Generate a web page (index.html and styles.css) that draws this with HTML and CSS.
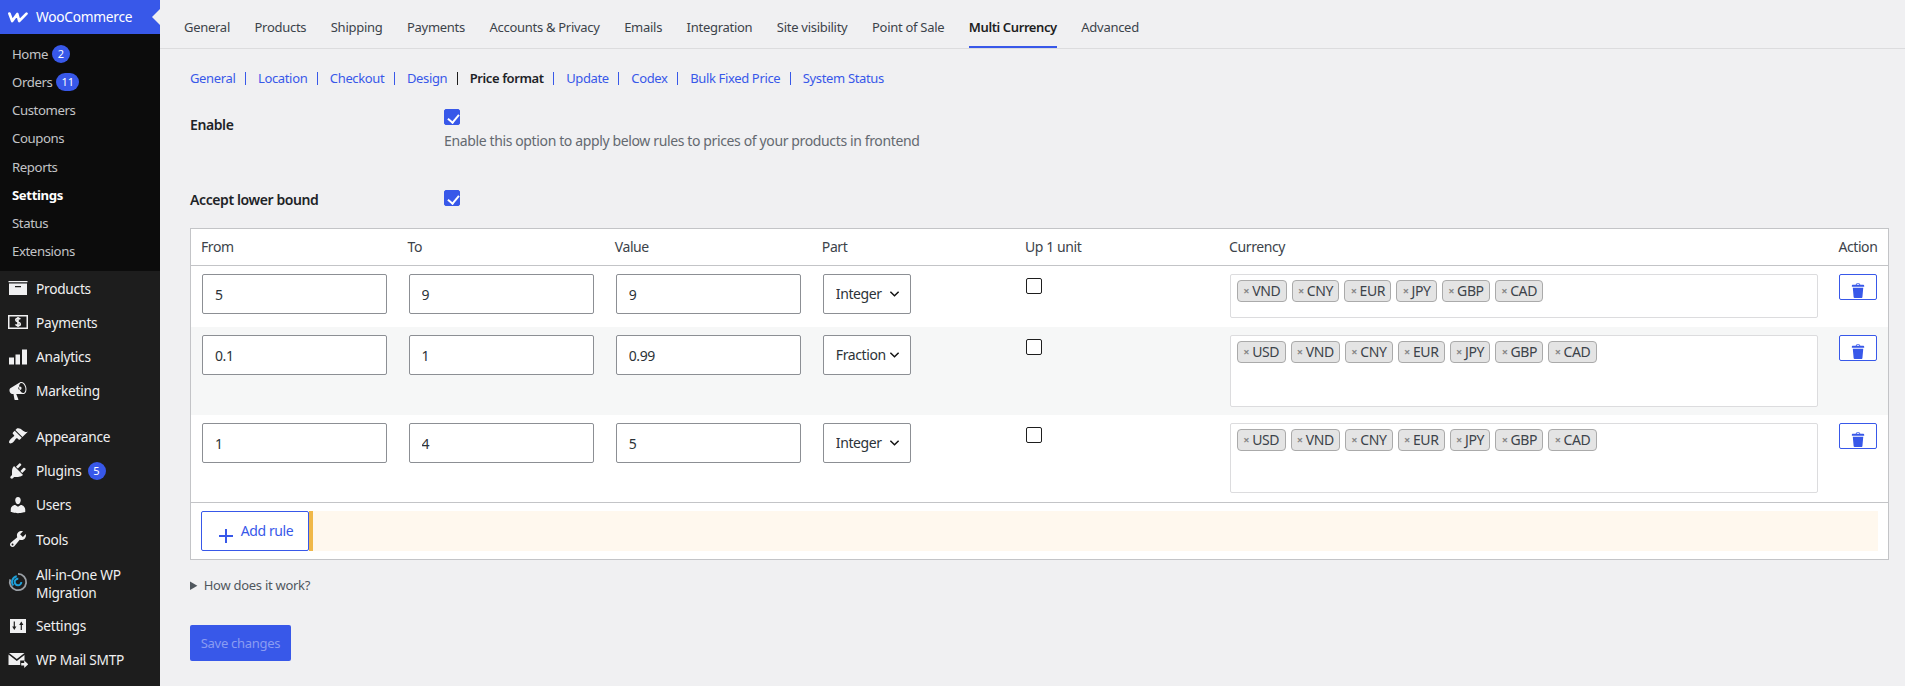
FILE: index.html
```html
<!DOCTYPE html>
<html lang="en">
<head>
<meta charset="utf-8">
<title>Multi Currency settings</title>
<link rel="stylesheet" href="styles.css">
</head>
<body>
<div class="app">
<aside class="sidebar">
  <a class="woo-head">
    <svg class="woo-logo" viewBox="0 0 20 11"><path d="M1.400 1.600L4.200 9 9.300 2l1.900 7 7.300-7.400"/></svg>
    <span>WooCommerce</span>
  </a>
  <ul class="submenu">
    <li>Home <b class="count">2</b></li>
    <li>Orders <b class="count">11</b></li>
    <li>Customers</li>
    <li>Coupons</li>
    <li>Reports</li>
    <li class="current">Settings</li>
    <li>Status</li>
    <li>Extensions</li>
  </ul>
  <ul class="mainmenu">
    <li><svg viewBox="0 0 20 20"><path d="M.500 3h19v1.200H.500zM1 5.500h18V17H1zM7 8v1.200h6V8z" fill-rule="evenodd"/></svg>Products</li>
    <li><svg viewBox="0 0 20 20"><path d="M0 3h20v14H0zm1.500 1.500v11h17v-11z" fill-rule="evenodd"/><path class="stroke" d="M12.300 7.300c-.5-.7-1.200-1-2.300-1-1.300 0-2.200.7-2.200 1.700 0 2.400 4.500 1.400 4.500 3.900 0 1-.9 1.700-2.300 1.700-1.200 0-2-.4-2.500-1.200M10 5v10"/></svg>Payments</li>
    <li><svg viewBox="0 0 20 20"><path d="M1 10h5v7H1zM7.500 7H12v10H7.500zM14 2h5v15h-5z" transform="translate(0 .4)"/></svg>Analytics</li>
    <li class="group-end"><svg viewBox="0 0 20 20"><path d="M18.150 5.940c.46 1.620.38 3.220-.02 4.480-.42 1.280-1.260 2.180-2.300 2.480-.16.060-.26.060-.4.060-.06.020-.12.020-.18.020-.06.020-.14.020-.22.020h-6.800l2.220 5.500c.02.140-.06.260-.14.340-.08.100-.24.160-.34.160H6.950c-.1 0-.26-.06-.34-.16-.08-.08-.16-.2-.14-.34l-1-5.500H4.250l-.02-.02c-.5.060-1.080-.18-1.540-.62s-.88-1.080-1.060-1.880c-.24-.8-.2-1.560-.02-2.200.18-.62.58-1.080 1.060-1.300l.02-.02 9-5.400c.1-.06.18-.1.24-.16.060-.04.14-.08.24-.12.16-.08.28-.12.5-.18 1.040-.3 2.240.1 3.220.98s1.840 2.240 2.260 3.860zm-2.580 5.980h-.02c.4-.1.74-.34 1.040-.7.58-.7.860-1.760.860-3.040 0-.64-.1-1.300-.26-1.980-.34-1.360-1.020-2.500-1.780-3.240s-1.680-1.100-2.460-.88c-.38.120-.72.340-1.020.7-.58.7-.86 1.760-.86 3.040 0 .64.1 1.300.26 1.980.34 1.360 1.020 2.500 1.780 3.240.78.74 1.680 1.100 2.460.88zm-4.760-3.500c.3.3.7.5 1.120.5.5 0 .9-.2 1.200-.5.3-.3.4-.7.4-1.200 0-.4-.1-.8-.4-1.100-.3-.3-.7-.5-1.200-.5-.42 0-.82.2-1.120.5-.28.3-.48.7-.48 1.100 0 .5.2.9.48 1.200z"/></svg>Marketing</li>
    <li><svg viewBox="0 0 20 20"><path d="M14.480 11.060L7.410 3.990l1.500-1.500c.5-.56 2.300-.47 3.510.32 1.210.8 1.430 1.280 2.910 2.100 1.180.64 2.450 1.260 4.450.85zm-.71.71L6.700 4.700 4.930 6.470c-.39.39-.39 1.020 0 1.410l1.060 1.060c.39.39.39 1.030 0 1.420-.6.6-1.430 1.110-2.210 1.690-.35.26-.7.53-1.010.84C1.430 14.230.4 16.080 1.400 17.070c.99 1 2.840-.03 4.180-1.360.31-.31.58-.66.85-1.020.57-.78 1.080-1.610 1.690-2.210.39-.39 1.020-.39 1.410 0l1.060 1.060c.39.39 1.020.39 1.410 0z"/></svg>Appearance</li>
    <li><svg viewBox="0 0 20 20"><path d="M13.110 4.360L9.870 7.600 8 5.730l3.240-3.240c.35-.34 1.050-.2 1.560.32.52.51.66 1.210.31 1.550zm-8 1.770l.91-1.120 9.010 9.010-1.190.84c-.71.71-2.630 1.160-3.820 1.160H6.140L4.900 17.260c-.59.59-1.540.59-2.120 0-.59-.58-.59-1.530 0-2.120l1.240-1.240v-3.880c0-1.130.4-3.190 1.090-3.890zm7.260 3.970l3.240-3.240c.34-.35 1.040-.21 1.550.31.52.51.66 1.210.31 1.550l-3.240 3.250z"/></svg>Plugins <b class="count">5</b></li>
    <li><svg viewBox="0 0 20 20"><path d="M10 9.250c-2.270 0-2.730-3.440-2.730-3.440C7 4.020 7.820 2 9.970 2c2.160 0 2.980 2.020 2.710 3.810 0 0-.41 3.440-2.680 3.440zm0 2.570L12.720 10c2.390 0 4.520 2.330 4.520 4.530v2.490s-3.650 1.130-7.240 1.130c-3.650 0-7.240-1.130-7.240-1.130v-2.490c0-2.250 1.940-4.480 4.470-4.480z"/></svg>Users</li>
    <li><svg viewBox="0 0 20 20"><path d="M16.680 9.770c-1.340 1.340-3.300 1.670-4.950.99l-5.410 6.520c-.99.99-2.590.99-3.580 0s-.99-2.590 0-3.570l6.520-5.420c-.68-1.650-.35-3.610.99-4.950 1.280-1.280 3.120-1.620 4.720-1.060l-2.890 2.890 2.820 2.820 2.860-2.870c.53 1.580.18 3.390-1.080 4.650zM3.810 16.210c.4.39 1.040.39 1.430 0 .4-.4.4-1.040 0-1.430-.39-.4-1.030-.4-1.430 0-.39.39-.39 1.030 0 1.430z"/></svg>Tools</li>
    <li class="two-line"><svg viewBox="0 0 20 20"><path class="ring-grey" d="M10 1.800a8.200 8.200 0 1 1-7.800 5.600"/><path class="ring-blue" d="M13.300 10a3.300 3.300 0 1 1-3-3.300"/><path class="ring-blue" d="M5.300 13.500A5.800 5.800 0 0 1 8.800 4.200"/></svg><span class="two-line-text">All-in-One WP<br>Migration</span></li>
    <li><svg viewBox="0 0 20 20"><path d="M2 3h16v14H2zM5.700 5.500v5H4.200L6.300 14l2.100-3.500H6.900v-5zm7 8.500h1.200V9h1.500l-2.100-3.500L11.200 9h1.500z" fill-rule="evenodd"/></svg>Settings</li>
    <li><svg viewBox="0 0 20 20"><path d="M1 3h15.500L8.800 9zM.5 4.600L8.800 11l7.700-6v5.500h-4.300V15H.5zM13.200 13h3V10.500l4 3.800-4 3.700v-2.500h-3z"/></svg>WP Mail SMTP</li>
  </ul>
</aside>
<main class="content">
  <nav class="tabs">
    <a>General</a><a>Products</a><a>Shipping</a><a>Payments</a><a>Accounts &amp; Privacy</a><a>Emails</a><a>Integration</a><a>Site visibility</a><a>Point of Sale</a><a class="active">Multi Currency</a><a>Advanced</a>
  </nav>
  <div class="panel">
    <nav class="subnav">
      <a>General</a><i></i><a>Location</a><i></i><a>Checkout</a><i></i><a>Design</a><i class="dark"></i><a class="here">Price format</a><i></i><a>Update</a><i></i><a>Codex</a><i></i><a>Bulk Fixed Price</a><i></i><a>System Status</a>
    </nav>
    <div class="field field-enable">
      <label class="field-label">Enable</label>
      <div class="field-body">
        <input type="checkbox" class="check" checked>
        <p class="desc">Enable this option to apply below rules to prices of your products in frontend</p>
      </div>
    </div>
    <div class="field field-lower">
      <label class="field-label">Accept lower bound</label>
      <div class="field-body"><input type="checkbox" class="check" checked></div>
    </div>
    <table class="rules">
      <colgroup><col class="c-num"><col class="c-num"><col class="c-num"><col class="c-part"><col class="c-up"><col class="c-cur"><col class="c-act"></colgroup>
      <thead><tr><th>From</th><th>To</th><th>Value</th><th>Part</th><th>Up 1 unit</th><th>Currency</th><th>Action</th></tr></thead>
      <tbody>
        <tr>
          <td><input class="text" value="5"></td><td><input class="text" value="9"></td><td><input class="text" value="9"></td>
          <td><select class="part"><option>Integer</option><option>Fraction</option></select></td>
          <td><input type="checkbox" class="check"></td>
          <td><div class="chips h44"><span class="chip"><em>×</em>VND</span><span class="chip"><em>×</em>CNY</span><span class="chip"><em>×</em>EUR</span><span class="chip"><em>×</em>JPY</span><span class="chip"><em>×</em>GBP</span><span class="chip"><em>×</em>CAD</span></div></td>
          <td><button class="trash"><svg viewBox="0 0 20 20"><path d="M12 4h3c.6 0 1 .4 1 1v1H3V5c0-.6.5-1 1-1h3c.2-1.100 1.300-2 2.500-2s2.300.9 2.500 2zM8 4h3c-.2-.6-.9-1-1.500-1S8.200 3.400 8 4zM4 7h11l-.9 10.100c0 .5-.5.9-1 .9H5.900c-.5 0-.9-.4-1-.9L4 7z"/></svg></button></td>
        </tr>
        <tr class="alt">
          <td><input class="text" value="0.1"></td><td><input class="text" value="1"></td><td><input class="text" value="0.99"></td>
          <td><select class="part"><option>Fraction</option><option>Integer</option></select></td>
          <td><input type="checkbox" class="check"></td>
          <td><div class="chips h72"><span class="chip"><em>×</em>USD</span><span class="chip"><em>×</em>VND</span><span class="chip"><em>×</em>CNY</span><span class="chip"><em>×</em>EUR</span><span class="chip"><em>×</em>JPY</span><span class="chip"><em>×</em>GBP</span><span class="chip"><em>×</em>CAD</span></div></td>
          <td><button class="trash"><svg viewBox="0 0 20 20"><path d="M12 4h3c.6 0 1 .4 1 1v1H3V5c0-.6.5-1 1-1h3c.2-1.100 1.300-2 2.500-2s2.300.9 2.500 2zM8 4h3c-.2-.6-.9-1-1.500-1S8.200 3.400 8 4zM4 7h11l-.9 10.100c0 .5-.5.9-1 .9H5.900c-.5 0-.9-.4-1-.9L4 7z"/></svg></button></td>
        </tr>
        <tr>
          <td><input class="text" value="1"></td><td><input class="text" value="4"></td><td><input class="text" value="5"></td>
          <td><select class="part"><option>Integer</option><option>Fraction</option></select></td>
          <td><input type="checkbox" class="check"></td>
          <td><div class="chips h71"><span class="chip"><em>×</em>USD</span><span class="chip"><em>×</em>VND</span><span class="chip"><em>×</em>CNY</span><span class="chip"><em>×</em>EUR</span><span class="chip"><em>×</em>JPY</span><span class="chip"><em>×</em>GBP</span><span class="chip"><em>×</em>CAD</span></div></td>
          <td><button class="trash"><svg viewBox="0 0 20 20"><path d="M12 4h3c.6 0 1 .4 1 1v1H3V5c0-.6.5-1 1-1h3c.2-1.100 1.300-2 2.500-2s2.300.9 2.500 2zM8 4h3c-.2-.6-.9-1-1.500-1S8.200 3.400 8 4zM4 7h11l-.9 10.100c0 .5-.5.9-1 .9H5.900c-.5 0-.9-.4-1-.9L4 7z"/></svg></button></td>
        </tr>
      </tbody>
      <tfoot><tr><td colspan="7"><div class="foot-row"><button class="add"><span class="plus"></span>Add rule</button><div class="notice"></div></div></td></tr></tfoot>
    </table>
    <details class="how"><summary>How does it work?</summary></details>
    <button class="save">Save changes</button>
  </div>
</main>
</div>
</body>
</html>
```
FILE: styles.css
```css
* { box-sizing: border-box; }
html, body { margin: 0; height: 686px; overflow: hidden; }
body {
  background: #f0f0f2;
  color: #3c434a;
  font: 13px/1.4 "Noto Sans", "Open Sans", sans-serif;
  letter-spacing: -.28px;
}
a { color: inherit; text-decoration: none; }
ul { list-style: none; margin: 0; padding: 0; }
.app { display: flex; height: 686px; }

/* sidebar */
.sidebar { width: 160px; flex: none; background: #1d1d1d; color: #f0f0f1; font-size: 13.7px; letter-spacing: -.25px; }
.woo-head {
  position: relative; display: flex; align-items: center; gap: 8px;
  height: 34px; padding-left: 8px; background: #3858e9; color: #fff;
}
.woo-head::after {
  content: ""; position: absolute; right: 0; top: 9px;
  border: 8px solid transparent; border-right-color: #f0f0f2; border-left-width: 0;
}
.woo-logo { width: 20px; height: 11px; flex: none; fill: none; stroke: #fff; stroke-width: 2.700; stroke-linejoin: round; stroke-linecap: round; }
.submenu { background: #0c0c0c; height: 237px; padding-top: 6px; color: #c3c4c7; letter-spacing: -.4px; }
.submenu li { height: 28.150px; line-height: 28px; padding-left: 12px; font-size: 13.200px; }
.submenu .current { color: #fff; font-weight: 700; }
.count {
  display: inline-block; min-width: 18px; height: 18px; padding: 0 5px; margin-left: 1px;
  border-radius: 9px; background: #3858e9; color: #fff;
  font: 400 11px/18px "Noto Sans", sans-serif; text-align: center; letter-spacing: 0; vertical-align: 1px;
}
.mainmenu li { display: flex; align-items: center; height: 34.300px; padding-left: 8px; }
.mainmenu li svg { width: 20px; height: 20px; flex: none; margin-right: 8px; fill: #f0f0f1; }
.mainmenu .count { margin-left: 6px; }
.mainmenu .group-end { margin-bottom: 11px; }
.mainmenu .two-line { height: 52px; line-height: 18.300px; }
.two-line-text { padding-top: 3px; }
.mainmenu li svg .stroke { fill: none; stroke: #f0f0f1; stroke-width: 1.600; }
.mainmenu li svg .ring-grey { fill: none; stroke: #9aa0a6; stroke-width: 1.800; }
.mainmenu li svg .ring-blue { fill: none; stroke: #1e9fd8; stroke-width: 2; }

/* tabs */
.content { flex: 1; min-width: 0; }
.tabs { display: flex; gap: 24.500px; height: 49px; padding: 0 0 0 24px; border-bottom: 1px solid #dcdcde; }
.tabs a { height: 48px; line-height: 54px; font-size: 13px; color: #3c434a; }
.tabs .active { color: #1e1e1e; font-weight: 600; border-bottom: 2px solid #3858e9; letter-spacing: -.4px; }

/* panel */
.panel { padding: 0 16px 0 30px; }
.subnav { display: flex; align-items: center; height: 18px; margin-top: 20px; color: #3858e9; letter-spacing: -.35px; }
.subnav i { width: 1px; height: 13px; margin: 0 12px 0 9.500px; background: #3858e9; }
.subnav i.dark { background: #1e1e1e; }
.subnav .here { color: #1d2327; font-weight: 600; letter-spacing: -.4px; }

.field { display: flex; }
.field-label { width: 254px; flex: none; font-size: 14px; font-weight: 600; color: #1d2327; letter-spacing: -.4px; }
.field-enable { margin-top: 22px; height: 81px; }
.field-enable .field-label { padding-top: 6px; }
.field-lower { height: 38px; }
.desc { margin: 6px 0 0; font-size: 14px; letter-spacing: -.37px; color: #646970; }
.check {
  appearance: none; display: block; position: relative; width: 16px; height: 16px; margin: 0;
  background: #fff; border: 1px solid #1e1e1e; border-radius: 2px;
}
.check:checked { background: #3858e9; border-color: #3858e9; }
.check:checked::before {
  content: ""; position: absolute; left: 4.500px; top: 1.500px; width: 5px; height: 9px;
  border: solid #fff; border-width: 0 2px 2px 0; transform: rotate(40deg);
}

/* table */
.rules { width: 1699px; border-collapse: collapse; table-layout: fixed; background: #fff; border: 1px solid #c3c4c7; font-size: 14px; letter-spacing: -.4px; }
.c-num { width: 207px; }
.c-part { width: 203px; }
.c-up { width: 204px; }
.c-cur { width: 609px; }
.c-act { width: 60px; }
.rules th { height: 37px; padding: 0 0 0 10px; text-align: left; font-weight: 400; color: #3c434a; border-bottom: 1px solid #c3c4c7; }
.rules tbody td { padding: 8px 11px; vertical-align: top; }
.rules tbody tr:first-child td, .rules tbody tr:last-child td { padding-bottom: 9px; }
.rules .alt td { background: #f6f7f7; }
.text, .part {
  display: block; height: 40px; margin: 0; background: #fff; border: 1px solid #8c8f94; border-radius: 2px;
  color: #2c3338; font: inherit; letter-spacing: inherit;
}
.text { width: 185px; padding: 0 12px; }
.part {
  appearance: none; width: 88px; padding: 0 16px 0 12px;
  background: #fff url("data:image/svg+xml,%3Csvg xmlns='http://www.w3.org/2000/svg' viewBox='0 0 12 8'%3E%3Cpath d='M1.500 1.500L6 6l4.500-4.500' fill='none' stroke='%23111' stroke-width='1.600'/%3E%3C/svg%3E") no-repeat right 10px center / 11px 8px;
}
.rules tbody td:nth-child(5) .check { margin-top: 4px; }
.chips { display: flex; flex-wrap: wrap; align-items: flex-start; gap: 5px; width: 588px; padding: 5px 6px 0; background: #fff; border: 1px solid #dcdcde; border-radius: 2px; }
.h44 { height: 44px; }
.h72 { height: 72px; }
.h71 { height: 70px; }
.chip {
  display: inline-flex; align-items: center; height: 22px; padding: 0 5.300px;
  background: #e4e4e4; border: 1px solid #aaa; border-radius: 4px; color: #3c434a;
}
.chip em { font-style: normal; color: #888; margin-right: 3px; font-weight: 700; font-size: 11px; }
.trash { display: block; position: relative; width: 38px; height: 26px; padding: 0; background: #fff; border: 1px solid #3858e9; border-radius: 2px; margin: 0; }
.trash svg { position: absolute; left: 9px; top: 6px; width: 19px; height: 19px; fill: #3858e9; }

.rules tfoot td { padding: 8px 10px; border-top: 1px solid #c3c4c7; }
.foot-row { display: flex; height: 40px; }
.add {
  display: flex; align-items: center; justify-content: center; gap: 8px; width: 108px; height: 40px; padding: 0 0 0 2px;
  background: #fff; border: 1px solid #3858e9; border-radius: 2px; color: #3858e9; font: inherit; letter-spacing: inherit;
}
.plus { position: relative; width: 14px; height: 14px; margin-top: 10px; }
.plus::before, .plus::after { content: ""; position: absolute; background: #3858e9; }
.plus::before { left: 0; right: 0; top: 6px; height: 2px; }
.plus::after { top: 0; bottom: 0; left: 6px; width: 2px; }
.notice { flex: 1; background: #fff8ee; border-left: 4px solid #f0b849; }

.how { margin-top: 16px; height: 18px; color: #50575e; }
.how summary { line-height: 18px; }
.save {
  display: block; width: 101px; height: 36px; margin-top: 31px; padding: 0;
  background: #3858e9; border: 0; border-radius: 2px; color: #8a9cf2; font: inherit; letter-spacing: inherit;
}
```
